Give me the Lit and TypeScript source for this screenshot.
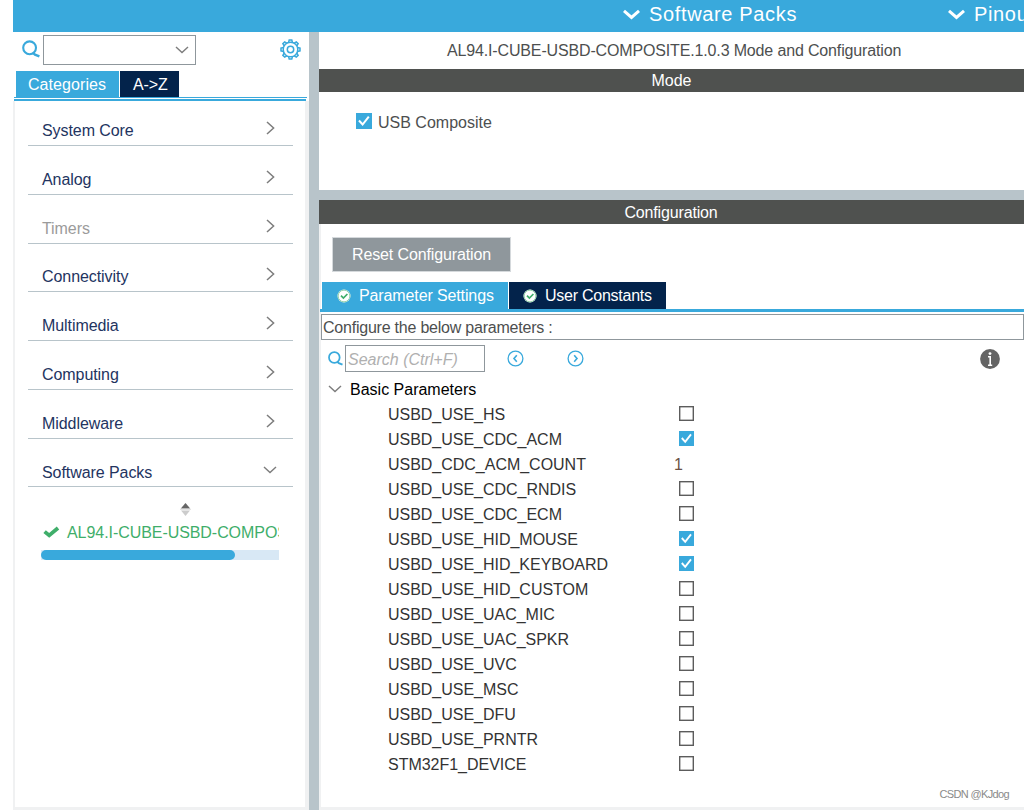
import { LitElement, html, css, svg } from "lit";
import { customElement, property, state } from "lit/decorators.js";
import { classMap } from "lit/directives/class-map.js";

type Param = { name: string; value: boolean | number };

const CATEGORIES = [
  { name: "System Core" },
  { name: "Analog" },
  { name: "Timers", disabled: true },
  { name: "Connectivity" },
  { name: "Multimedia" },
  { name: "Computing" },
  { name: "Middleware" },
  { name: "Software Packs", open: true },
];

const PARAMS: Param[] = [
  { name: "USBD_USE_HS", value: false },
  { name: "USBD_USE_CDC_ACM", value: true },
  { name: "USBD_CDC_ACM_COUNT", value: 1 },
  { name: "USBD_USE_CDC_RNDIS", value: false },
  { name: "USBD_USE_CDC_ECM", value: false },
  { name: "USBD_USE_HID_MOUSE", value: true },
  { name: "USBD_USE_HID_KEYBOARD", value: true },
  { name: "USBD_USE_HID_CUSTOM", value: false },
  { name: "USBD_USE_UAC_MIC", value: false },
  { name: "USBD_USE_UAC_SPKR", value: false },
  { name: "USBD_USE_UVC", value: false },
  { name: "USBD_USE_MSC", value: false },
  { name: "USBD_USE_DFU", value: false },
  { name: "USBD_USE_PRNTR", value: false },
  { name: "STM32F1_DEVICE", value: false },
];

const chevronDown = html`<svg width="14" height="8" viewBox="0 0 14 8" fill="none" stroke="#7d7d7d" stroke-width="1.4"><path d="M1 1L7 6.6L13 1" /></svg>`;
const chevronRight = html`<svg width="9" height="14" viewBox="0 0 9 14" fill="none" stroke="#7d7d7d" stroke-width="1.5"><path d="M1 1L7.6 7L1 13" /></svg>`;
const boldChevron = html`<svg width="17" height="11" viewBox="0 0 17 11" fill="none" stroke="#fff" stroke-width="3"><path d="M1 1.8L8.5 8.4L16 1.8" /></svg>`;
const magnifier = (size: number) => html`<svg width=${size} height=${size} viewBox="0 0 18 18" fill="none" stroke="#39a9dc"><circle cx="7.6" cy="7.8" r="6.4" stroke-width="2.1" /><path d="M11.2 13L13 14.6L17.4 16.4" stroke-width="2.4" /></svg>`;
const teeth = [0, 45, 90, 135, 180, 225, 270, 315].map(
  (a) => svg`<path d="M8.6 3.4L9.2 1H11.8L12.4 3.4" transform="rotate(${a} 10.5 10.5)" />`
);
const gear = html`<svg width="21" height="21" viewBox="0 0 21 21" fill="none" stroke="#39a9dc" stroke-width="1.5"><circle cx="10.5" cy="10.5" r="7.3" /><circle cx="10.5" cy="10.5" r="3.2" />${teeth}</svg>`;
const okBadge = html`<svg width="14" height="14" viewBox="0 0 14 14"><circle cx="7" cy="7" r="6.5" fill="#fff" /><circle cx="7" cy="7" r="5.9" fill="none" stroke="#8fd0a6" stroke-width="1" /><path d="M4 6.6L6.4 9L10.4 5" fill="none" stroke="#3fae6a" stroke-width="1.7" /></svg>`;

@customElement("check-box")
export class CheckBox extends LitElement {
  @property({ type: Boolean }) checked = false;
  static styles = css`
    :host { display: block; width: 15px; height: 15px; }
    svg { display: block; width: 100%; height: 100%; }
  `;
  render() {
    return this.checked
      ? html`<svg viewBox="0 0 15 15"><rect width="15" height="15" fill="#39a9dc" /><path d="M2.8 7L6.2 10.8L12 3.4" fill="none" stroke="#fff" stroke-width="1.9" /></svg>`
      : html`<svg viewBox="0 0 15 15"><rect x=".7" y=".7" width="13.6" height="13.6" fill="#fff" stroke="#5c5c5c" stroke-width="1.4" /></svg>`;
  }
}

@customElement("category-panel")
export class CategoryPanel extends LitElement {
  static styles = css`
    :host { display: flex; flex-direction: column; width: 296px; }
    svg { display: block; flex: none; }
    .find { display: flex; align-items: center; height: 39px; padding-left: 9px; }
    .find .lens { margin-top: -5px; }
    .combo { box-sizing: border-box; display: flex; align-items: center; justify-content: flex-end; width: 153px; height: 30px; margin: -3px 0 0 3px; padding-right: 6px; border: 1px solid #8f979c; }
    .gear { margin: -5px 8px 0 auto; }
    .tabs { display: flex; gap: 1px; height: 26px; margin-left: 3px; }
    .tab { box-sizing: border-box; padding-left: 12px; line-height: 27px; color: #fff; background: #39a9dc; width: 103px; letter-spacing: .07px; }
    .tab.dark { width: 59px; background: #03234b; padding-left: 13px; letter-spacing: -.15px; }
    .rule { height: 1px; margin: 0 2px 1px 1px; background: #39a9dc; }
    .rule.thick { height: 2px; margin: 0 3px 0 1px; background: #39a9dc; }
    .body { flex: 1; border: solid #f0f1f2; border-width: 0 4px 3px 2px; padding-left: 13px; display: flex; flex-direction: column; }
    .item { box-sizing: border-box; width: 265px; height: 48.75px; border-bottom: 1px solid #b8c4ca; display: flex; align-items: flex-end; justify-content: space-between; padding: 0 18px 5px 14px; line-height: 18px; color: #23345f; letter-spacing: -.07px; }
    .item svg { margin-bottom: 5px; }
    .item.open { padding: 0 16px 4.5px 14px; }
    .item.open svg { margin-bottom: 8px; }
    .item.off { color: #9b9b9b; }
    .item:first-child { height: 45px; }
    .pack { width: 238px; margin: 16px 0 0 13px; display: flex; flex-direction: column; }
    .sort { align-self: center; margin-left: 51px; }
    .name { display: flex; align-items: center; height: 20px; margin-top: 7px; overflow: hidden; white-space: nowrap; color: #3fae6a; letter-spacing: -.06px; }
    .name svg { margin: -1px 7px 0 2px; }
    .track { height: 10px; margin-top: 7px; background: #d8e8f5; }
    .thumb { width: 194px; height: 10px; border-radius: 5px; background: #39a9dc; }
  `;
  render() {
    return html`
      <div class="find">
        <span class="lens">${magnifier(18)}</span>
        <div class="combo">${chevronDown}</div>
        <span class="gear">${gear}</span>
      </div>
      <div class="tabs"><div class="tab">Categories</div><div class="tab dark">A-&gt;Z</div></div>
      <div class="rule"></div>
      <div class="rule thick"></div>
      <div class="body">
        ${CATEGORIES.map(
          (c) => html`<div class=${classMap({ item: true, off: !!c.disabled, open: !!c.open })}>
            <span>${c.name}</span>${c.open ? chevronDown : chevronRight}
          </div>`
        )}
        <div class="pack">
          <svg class="sort" width="11" height="13" viewBox="0 0 11 13"><path d="M.8 5.5L5.5 0L10.2 5.5Z" fill="#666" /><path d="M0 6.3H11" stroke="#ddd" /><path d="M1 7.5L5.5 13L10 7.5Z" fill="#ccc" /></svg>
          <div class="name">
            <svg width="17" height="13" viewBox="0 0 17 13" fill="none" stroke="#3fae6a" stroke-width="3.8"><path d="M1.6 5.6L6.2 9.4L15 2" /></svg>
            <span>AL94.I-CUBE-USBD-COMPOSITE</span>
          </div>
          <div class="track"><div class="thumb"></div></div>
        </div>
      </div>`;
  }
}

@customElement("config-panel")
export class ConfigPanel extends LitElement {
  @state() private params = PARAMS;
  static styles = css`
    :host { display: flex; flex-direction: column; flex: 1; min-width: 0; color: #4d4f4f; }
    svg { display: block; flex: none; }
    .title { height: 37px; line-height: 37px; padding-left: 128px; letter-spacing: -.15px; }
    .bar { height: 23px; line-height: 23px; text-align: center; color: #fff; background: #4f514f; }
    .bar.second { height: 24px; line-height: 25px; padding-right: 1px; letter-spacing: -.15px; }
    .mode { display: flex; align-items: flex-start; gap: 6px; height: 76px; padding: 22px 0 0 37px; border-bottom: 10px solid #b8c4ca; line-height: 18px; }
    .mode check-box { width: 16px; height: 16px; margin-top: -1px; }
    .config { flex: 1; display: flex; flex-direction: column; border: solid #f0f1f2; border-width: 0 0 3px 2px; }
    .reset { box-sizing: border-box; width: 179px; height: 35px; margin: 13px 0 0 11px; line-height: 33px; border: 1px solid #d5d9dc; text-align: center; color: #fff; background: #8f979c; letter-spacing: -.13px; }
    .tabs { display: flex; gap: 1px; margin: 10px 0 0 1px; height: 27px; }
    .tab { box-sizing: border-box; display: flex; align-items: center; gap: 8px; width: 186px; padding-left: 15px; color: #fff; background: #39a9dc; letter-spacing: -.12px; }
    .tab.dark { width: 157px; padding-left: 14px; background: #03234b; letter-spacing: -.25px; }
    .rule { height: 3px; margin-left: -1px; background: #39a9dc; }
    .hint { box-sizing: border-box; height: 26px; margin-top: 2px; border: 1px solid #8f979c; padding-left: 1px; line-height: 25px; letter-spacing: -.22px; }
    .search { display: flex; align-items: center; height: 27px; margin-top: 5px; padding-left: 7px; }
    .field { box-sizing: border-box; width: 140px; height: 27px; margin-left: 2px; padding-left: 2px; border: 1px solid #8f979c; line-height: 27px; font-style: italic; color: #b0b0b0; }
    .prev { margin-left: 22px; }
    .next { margin-left: 43px; }
    .info { margin: 0 24px 0 auto; }
    .group { display: flex; align-items: center; gap: 8px; height: 30px; padding: 4px 0 0 7px; box-sizing: border-box; color: #000; }
    .group span { margin-top: 2px; line-height: 18px; }
    .row { display: grid; grid-template-columns: 291px auto; justify-content: start; align-items: center; height: 25px; line-height: 19px; padding-left: 67px; color: #333; letter-spacing: -.02px; }
    .row check-box { margin-top: -2px; }
    .num { margin-left: -5px; color: #6b5145; }
    .stamp { align-self: flex-end; margin: 10px 15px 0 0; font-size: 11px; line-height: 14px; color: #8a8a8a; letter-spacing: -.65px; }
  `;
  private round(d: string) {
    return html`<svg width="17" height="17" viewBox="0 0 17 17" fill="none" stroke="#39a9dc"><circle cx="8.5" cy="8.5" r="7.4" stroke-width="1.3" /><path d=${d} stroke-width="1.6" /></svg>`;
  }
  render() {
    return html`
      <div class="title">AL94.I-CUBE-USBD-COMPOSITE.1.0.3 Mode and Configuration</div>
      <div class="bar">Mode</div>
      <div class="mode"><check-box checked></check-box><span>USB Composite</span></div>
      <div class="bar second">Configuration</div>
      <div class="config">
        <div class="reset">Reset Configuration</div>
        <div class="tabs">
          <div class="tab">${okBadge}<span>Parameter Settings</span></div>
          <div class="tab dark">${okBadge}<span>User Constants</span></div>
        </div>
        <div class="rule"></div>
        <div class="hint">Configure the below parameters :</div>
        <div class="search">
          ${magnifier(15)}
          <div class="field">Search (Ctrl+F)</div>
          <span class="prev">${this.round("M9.8 5.2L7 8.5L9.8 11.8")}</span>
          <span class="next">${this.round("M7.2 5.2L10 8.5L7.2 11.8")}</span>
          <svg class="info" width="20" height="20" viewBox="0 0 20 20"><circle cx="10" cy="10" r="9.9" fill="#646464" /><path d="M8 7.7H10.2V16M8 16.2H12.2" fill="none" stroke="#fff" stroke-width="1.6" /><circle cx="10" cy="4.6" r="1.4" fill="#fff" /></svg>
        </div>
        <div class="group">${chevronDown}<span>Basic Parameters</span></div>
        ${this.params.map(
          (p) => html`<div class="row"><span>${p.name}</span>${
            typeof p.value === "number"
              ? html`<span class="num">${p.value}</span>`
              : html`<check-box ?checked=${p.value}></check-box>`
          }</div>`
        )}
        <div class="stamp">CSDN @KJdog</div>
      </div>`;
  }
}

@customElement("app-root")
export class AppRoot extends LitElement {
  static styles = css`
    :host { display: flex; flex-direction: column; box-sizing: border-box; width: 1024px; height: 810px; padding-left: 13px; overflow: hidden; background: #fff; font: 16px "Liberation Sans", Arial, sans-serif; }
    .head { display: flex; height: 32px; box-sizing: border-box; padding-left: 610px; background: #39a9dc; color: #fff; font-size: 20px; line-height: 29px; letter-spacing: .65px; white-space: nowrap; overflow: hidden; }
    .menu { display: flex; flex: none; align-items: flex-start; gap: 9px; width: 325px; }
    .menu svg { margin-top: 9px; }
    .main { flex: 1; display: flex; min-height: 0; }
    .split { width: 10px; background: #b8c4ca; }
  `;
  render() {
    return html`
      <div class="head">
        <div class="menu">${boldChevron}<span>Software Packs</span></div>
        <div class="menu">${boldChevron}<span>Pinout</span></div>
      </div>
      <div class="main">
        <category-panel></category-panel>
        <div class="split"></div>
        <config-panel></config-panel>
      </div>`;
  }
}
